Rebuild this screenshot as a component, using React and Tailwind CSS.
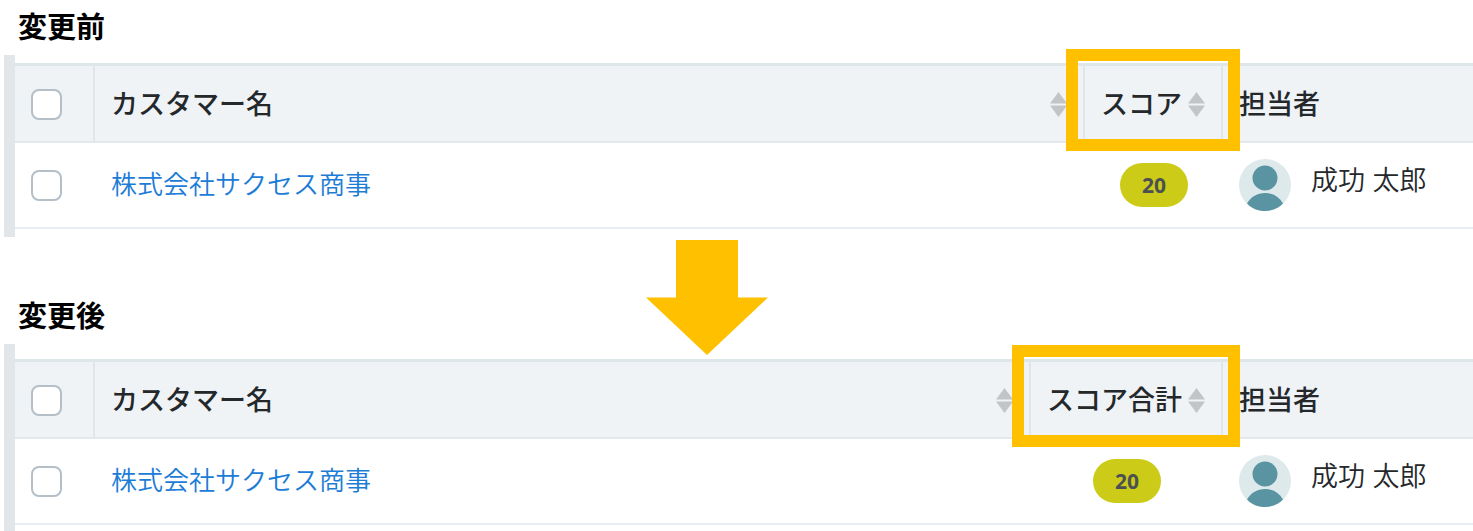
import { clsx } from "clsx";

const customer = {
  name: "株式会社サクセス商事",
  score: 20,
  owner: "成功 太郎",
};

function SortIcon() {
  return (
    <svg viewBox="0 0 17 25" className="h-[25px] w-[17px] shrink-0" aria-hidden="true">
      <path d="M8.5 0 17 11.5H0Z" fill="#c3c4c6" />
      <path d="M0 13.500h17L8.5 25Z" fill="#c3c4c6" />
    </svg>
  );
}

function Avatar() {
  return (
    <svg viewBox="0 0 52 52" className="h-[52px] w-[52px] shrink-0" aria-hidden="true">
      <circle cx="26" cy="26" r="26" fill="#dde9eb" />
      <circle cx="26" cy="19" r="12.5" fill="#5a94a2" />
      <path d="M8 44.500C12 37.500 18.500 34 26 34s14 3.500 18 10.500C39.500 49.500 33 52 26 52S12.500 49.500 8 44.500Z" fill="#5a94a2" />
    </svg>
  );
}

function Checkbox({ label }) {
  return (
    <input
      type="checkbox"
      aria-label={label}
      className="block h-[31px] w-[31px] appearance-none rounded-lg border-2 border-[#b4bfc8] bg-white checked:bg-[#1c7cd6]"
    />
  );
}

function HeaderCell({ className, children }) {
  return (
    <th
      scope="col"
      className={clsx(
        "h-20 border-t-3 border-b-2 border-t-[#dfe6e9] border-b-[#e2e8eb] bg-[#eff3f6] px-4 pt-0.5 pb-0 text-left font-medium whitespace-nowrap",
        className,
      )}
    >
      {children}
    </th>
  );
}

function SortButton({ children }) {
  return (
    <button type="button" className="flex w-full items-center justify-between">
      {children}
      <SortIcon />
    </button>
  );
}

function CustomerTable({ scoreLabel, scoreColumn, className }) {
  const cell = "h-[86px] border-b-2 border-[#e8edef] p-0 px-4";

  return (
    <div className={clsx("ml-1 border-l-11 border-[#e2e6e8]", className)}>
      <table className="w-full table-fixed border-separate border-spacing-0 text-[27px] leading-10 text-[#24282b]">
        <colgroup>
          <col className="w-20" />
          <col />
          <col className={scoreColumn} />
          <col className="w-[250px]" />
        </colgroup>
        <thead>
          <tr>
            <HeaderCell className="border-r-2 border-r-[#e1e6e9]">
              <Checkbox label="すべて選択" />
            </HeaderCell>
            <HeaderCell className="border-r-2 border-r-[#e1e6e9]">
              <SortButton>カスタマー名</SortButton>
            </HeaderCell>
            <HeaderCell className="relative border-r-2 border-r-[#e1e6e9]">
              <SortButton>{scoreLabel}</SortButton>
              <div className="pointer-events-none absolute -inset-x-[19px] -top-[17px] -bottom-[10px] z-10 border-12 border-[#ffc000]" />
            </HeaderCell>
            <HeaderCell>担当者</HeaderCell>
          </tr>
        </thead>
        <tbody>
          <tr>
            <td className={cell}>
              <Checkbox label={customer.name} />
            </td>
            <td className={cell}>
              <a href="#customer" className="text-[26px] font-[350] text-[#1c7cd6]">
                {customer.name}
              </a>
            </td>
            <td className={clsx(cell, "text-center")}>
              <span className="inline-block h-11 w-[68px] rounded-full bg-[#cccc18] align-middle font-['Open_Sans',sans-serif] text-[21px] leading-11 font-bold text-[#4b5052]">
                {customer.score}
              </span>
            </td>
            <td className={cell}>
              <div className="flex items-start gap-5">
                <Avatar />
                <span className="leading-11 font-[350] whitespace-nowrap">{customer.owner}</span>
              </div>
            </td>
          </tr>
        </tbody>
      </table>
    </div>
  );
}

function SectionTitle({ children }) {
  return <h2 className="pt-0.5 pl-[18px] text-[29px] leading-[53px] font-bold text-black">{children}</h2>;
}

export default function App() {
  return (
    <main className="bg-white font-['Liberation_Sans','Noto_Sans_CJK_JP',sans-serif]" lang="ja">
      <section>
        <SectionTitle>変更前</SectionTitle>
        <CustomerTable scoreLabel="スコア" scoreColumn="w-[138px]" className="pt-2 pb-2" />
      </section>

      <section className="relative mt-[52px]">
        <SectionTitle>変更後</SectionTitle>
        <CustomerTable scoreLabel="スコア合計" scoreColumn="w-[192px]" className="pt-[15px] pb-1.5" />
        <svg
          viewBox="0 0 122 115"
          className="absolute -top-[49px] left-[48%] h-[115px] w-[122px] -translate-x-1/2"
          aria-hidden="true"
        >
          <path d="M30 0h62v57.500h30L61 115 0 57.500h30Z" fill="#ffc000" />
        </svg>
      </section>
    </main>
  );
}
